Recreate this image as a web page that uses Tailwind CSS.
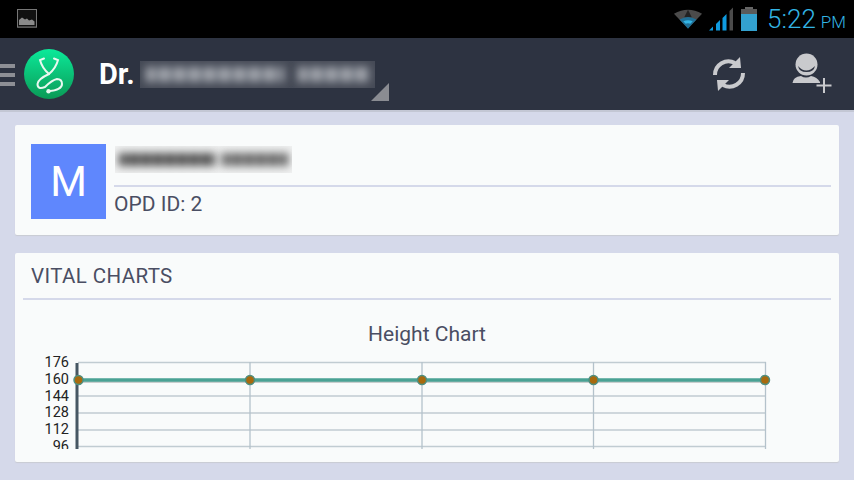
<!DOCTYPE html>
<html lang="en">
  <head>
    <meta charset="UTF-8" />
    <meta name="viewport" content="width=device-width, initial-scale=1.0" />
    <title>Vital Charts</title>
    <script src="https://cdn.jsdelivr.net/npm/@tailwindcss/browser@4"></script>
  </head>
  <body class="w-[854px] h-[480px] overflow-hidden bg-[#d5d9ea] font-['Roboto',sans-serif]">
    <!-- status bar -->
    <div class="h-[38px] bg-black flex items-center pl-[17px] pr-[8px]">
      <svg width="20" height="20" viewBox="0 0 20 20" class="mt-[-1px]">
        <rect x="0.5" y="0.5" width="19" height="17.5" fill="#111" stroke="#777" stroke-width="1" />
        <path d="M2 16V11L5 8.500L8 10.500L10 9.500L12 11.500L15 10.500L17.500 12.500V16Z" fill="#8a8a8a" />
        <rect x="0" y="18" width="20" height="1" fill="#555" />
      </svg>
      <div class="ml-auto flex items-center">
        <svg width="30" height="22" viewBox="0 0 32 22" class="mr-[6px]">
          <path d="M1 5.500Q16 -3.500 31 5.500L16 21Z" fill="#4b4b4b" />
          <path d="M16 1L20 9H12Z" fill="#222" />
          <path d="M7 11.500Q16 6 25 11.500L16 21Z" fill="#1f6f96" />
          <path d="M11 13.500Q16 11 21 13.500L16 19Z" fill="#33b5e5" />
          <path d="M13 16Q16 15 19 16L16 21Z" fill="#1f6f96" />
        </svg>
        <svg width="25" height="24" viewBox="0 0 25 24" class="mr-[7px]">
          <path d="M0 23.500L4 23.500V19.500Z" fill="#0f9be0" />
          <path d="M7 23.500H11V13L7 17Z" fill="#0f9be0" />
          <path d="M13.500 23.500H17.500V7L13.500 11Z" fill="#0f9be0" />
          <path d="M20.500 23.500H24V0.500L20.500 4Z" fill="#4b4b4b" />
        </svg>
        <svg width="16" height="24" viewBox="0 0 16 24" class="mr-[10px]">
          <rect x="4" y="0" width="8" height="3" fill="#666" />
          <rect x="0" y="2" width="16" height="22" fill="#5a5a5a" />
          <rect x="0" y="7" width="16" height="17" fill="#33a1cf" />
        </svg>
        <span class="text-[#33b5e5] text-[26px] leading-none font-light">5:22</span>
        <span class="text-[#33b5e5] text-[17px] leading-none ml-[5px] mt-[6px] font-light">PM</span>
      </div>
    </div>

    <!-- action bar -->
    <div class="h-[74px] bg-[#2d3341] border-b-2 border-[#c3c7d4] flex items-center relative">
      <div class="w-[15px] flex flex-col gap-[5px] shrink-0 mt-[2px]">
        <div class="h-[4px] bg-[#8d8f95]"></div>
        <div class="h-[4px] bg-[#8d8f95]"></div>
        <div class="h-[4px] bg-[#8d8f95]"></div>
      </div>
      <div class="ml-[9px] w-[50px] h-[50px] rounded-full bg-gradient-to-b from-[#0bea9a] to-[#0a9a56] shrink-0">
        <svg width="50" height="50" viewBox="0 0 50 50" fill="none" stroke="#e8f8f0" stroke-width="2" stroke-linecap="round">
          <path d="M20 9.500L16 11Q18 19 25 25Q32 19 34 11L30 9.500" />
          <path d="M25 25Q14 30 13.500 35Q13.500 41 21 38Q28 31 33 30Q38 30 38 35Q38 41 24.500 42.300" />
          <circle cx="24.500" cy="42.300" r="2.200" fill="#e8f8f0" stroke="none" />
        </svg>
      </div>
      <span class="ml-[25px] text-white text-[29px] font-bold leading-none">Dr.</span>
      <div class="ml-[5px] w-[235px] h-[27px] overflow-hidden bg-[#454a56] flex gap-[14px] pl-[6px] pt-[6px]">
        <div class="w-[138px] h-[15px] blur-[4px] bg-[repeating-linear-gradient(90deg,#a8abb2_0px,#a8abb2_7px,#5a5f6b_11px,#a8abb2_15px)]"></div>
        <div class="w-[72px] h-[15px] blur-[4px] bg-[repeating-linear-gradient(90deg,#a8abb2_0px,#a8abb2_7px,#5a5f6b_11px,#a8abb2_15px)]"></div>
      </div>
      <div class="absolute left-[371px] top-[45px] w-0 h-0 border-b-[18px] border-l-[18px] border-b-[#8a8c92] border-l-transparent"></div>
      <svg width="36" height="38" viewBox="0 0 36 38" fill="#c9cacd" class="absolute left-[711px] top-[18px]">
        <path d="M4 19A13.500 13.500 0 0 1 24 7" fill="none" stroke="#c9cacd" stroke-width="4" />
        <path d="M29 1L30 12H18Z" />
        <path d="M32 17A13.500 13.500 0 0 1 12 29" fill="none" stroke="#c9cacd" stroke-width="4" />
        <path d="M7 35L6 24H18Z" />
      </svg>
      <svg width="44" height="44" viewBox="0 0 44 44" class="absolute left-[792px] top-[14px]">
        <circle cx="14.500" cy="12.500" r="11" fill="#c9cacd" />
        <path d="M6 14Q14 23 23 14Q22 20 14.500 20Q7 20 6 14Z" fill="#2d3341" />
        <path d="M0.500 31Q1 25 9 24Q14 27 19 24Q25 25 28 30V31Z" fill="#c9cacd" />
        <path d="M32 26V41M24.500 33.500H39.500" stroke="#c9cacd" stroke-width="2" />
      </svg>
    </div>

    <div class="flex flex-col gap-[18px] px-[15px] pt-[13px]">
      <!-- patient card -->
      <div class="h-[110px] bg-[#f9fbfb] rounded-[2px] shadow-[0_1px_1px_#c9cbd3] flex pl-[16px] pr-[8px] pt-[19px]">
        <div class="w-[75px] h-[75px] bg-[#5f87fd] flex items-center justify-center text-white text-[42px] font-normal leading-none">M</div>
        <div class="ml-[8px] flex-1">
          <div class="h-[27px] w-[177px] mt-[2px] ml-[1px] overflow-hidden bg-[#f0f1f1] flex gap-[6px] pl-[4px] pt-[7px]">
            <div class="w-[97px] h-[13px] blur-[4px] bg-[repeating-linear-gradient(90deg,#444_0px,#444_6px,#999_9px,#444_12px)]"></div>
            <div class="w-[66px] h-[13px] blur-[4px] bg-[repeating-linear-gradient(90deg,#555_0px,#555_6px,#bbb_9px,#555_12px)]"></div>
          </div>
          <div class="h-[2px] bg-[#d5d9ea] mt-[12px]"></div>
          <div class="text-[#4a4e63] text-[21px] leading-none mt-[7px]">OPD ID: 2</div>
        </div>
      </div>

      <!-- charts card -->
      <div class="h-[209px] bg-[#f9fbfb] rounded-[2px] shadow-[0_1px_1px_#c9cbd3] px-[8px] overflow-hidden">
        <div class="h-[47px] border-b-2 border-[#d5d9ea] pl-[8px] pt-[13px] text-[#4a4e63] text-[20.500px] leading-[21px] tracking-[0.4px]">VITAL CHARTS</div>
        <div class="text-center text-[#4a4e63] text-[21px] leading-none mt-[24px] ml-[-8px] w-[824px]">Height Chart</div>
        <svg width="808" height="100" viewBox="23 349 808 100" class="mt-[4px] block">
          <g stroke="#c1ccd2" stroke-width="1.500">
            <path d="M78 362.500H766M78 396H766M78 413H766M78 430H766M78 446.500H766" />
          </g>
          <g stroke="#b4c2cb" stroke-width="1.300">
            <path d="M250 362V449M422 362V449M593.500 362V449M765.500 362V449" />
          </g>
          <path d="M77 363V449" stroke="#475763" stroke-width="3" />
          <g fill="#222" font-size="14.500" text-anchor="end">
            <text x="69" y="367">176</text>
            <text x="69" y="384">160</text>
            <text x="69" y="400.500">144</text>
            <text x="69" y="417">128</text>
            <text x="69" y="434">112</text>
            <text x="69" y="450.500">96</text>
          </g>
          <path d="M78 381H765" stroke="#9aa3a3" stroke-width="4" opacity="0.500" />
          <path d="M78 380H765" stroke="#4aa294" stroke-width="3.500" />
          <g fill="#a86a0e" stroke="#4f8f80" stroke-width="1.500">
            <circle cx="78.500" cy="380" r="4.500" />
            <circle cx="250" cy="380" r="4.500" />
            <circle cx="422" cy="380" r="4.500" />
            <circle cx="593.500" cy="380" r="4.500" />
            <circle cx="765" cy="380" r="4.500" />
          </g>
        </svg>
      </div>
    </div>
  </body>
</html>
